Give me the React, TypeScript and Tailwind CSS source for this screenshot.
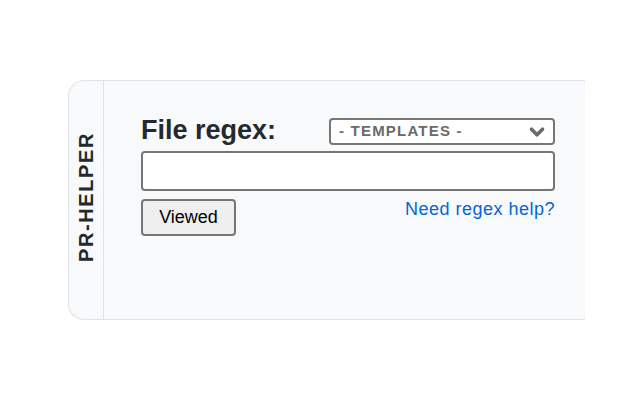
import { ChevronDown } from 'lucide-react';

export default function App() {
  return (
    <div className="w-[640px] h-[400px] bg-white pt-[80px] pl-[68px]" style={{ fontFamily: '"Liberation Sans", Arial, sans-serif' }}>
      <div className="flex w-[517px] h-[240px] bg-[#f8f9fb] border-t border-b border-l border-[#dfe2e6] rounded-l-[16px]">
        <div className="w-[35px] shrink-0 border-r border-[#dfe2e6] flex items-center justify-center pb-[6px]">
          <span className="-rotate-90 whitespace-nowrap text-[20px] font-bold tracking-[1.6px] text-[#24292e]">PR-HELPER</span>
        </div>
        <div className="flex-1 pl-[37px] pr-[30px] pt-[34px]">
          <div className="flex items-end justify-between">
            <h2 className="text-[27px] leading-[30px] font-bold text-[#24292e]">File regex:</h2>
            <div className="w-[226px] h-[27px] border-2 border-[#767676] rounded-[4px] bg-white flex items-center justify-between pl-[8px] pr-[5px]">
              <span className="text-[15px] font-bold tracking-[1.2px] text-[#6a6a6a]">- TEMPLATES -</span>
              <ChevronDown size={22} strokeWidth={4} className="text-[#6a6a6a]" />
            </div>
          </div>
          <div className="mt-[6px] h-[40px] border-2 border-[#767676] rounded-[4px] bg-white" />
          <div className="mt-[8px] flex items-start justify-between">
            <button className="w-[95px] h-[37px] bg-[#efefef] border-2 border-[#767676] rounded-[4px] text-[18px] text-black">Viewed</button>
            <a className="text-[18px] leading-[20px] tracking-[0.5px] text-[#0366d6]">Need regex help?</a>
          </div>
        </div>
      </div>
    </div>
  );
}
